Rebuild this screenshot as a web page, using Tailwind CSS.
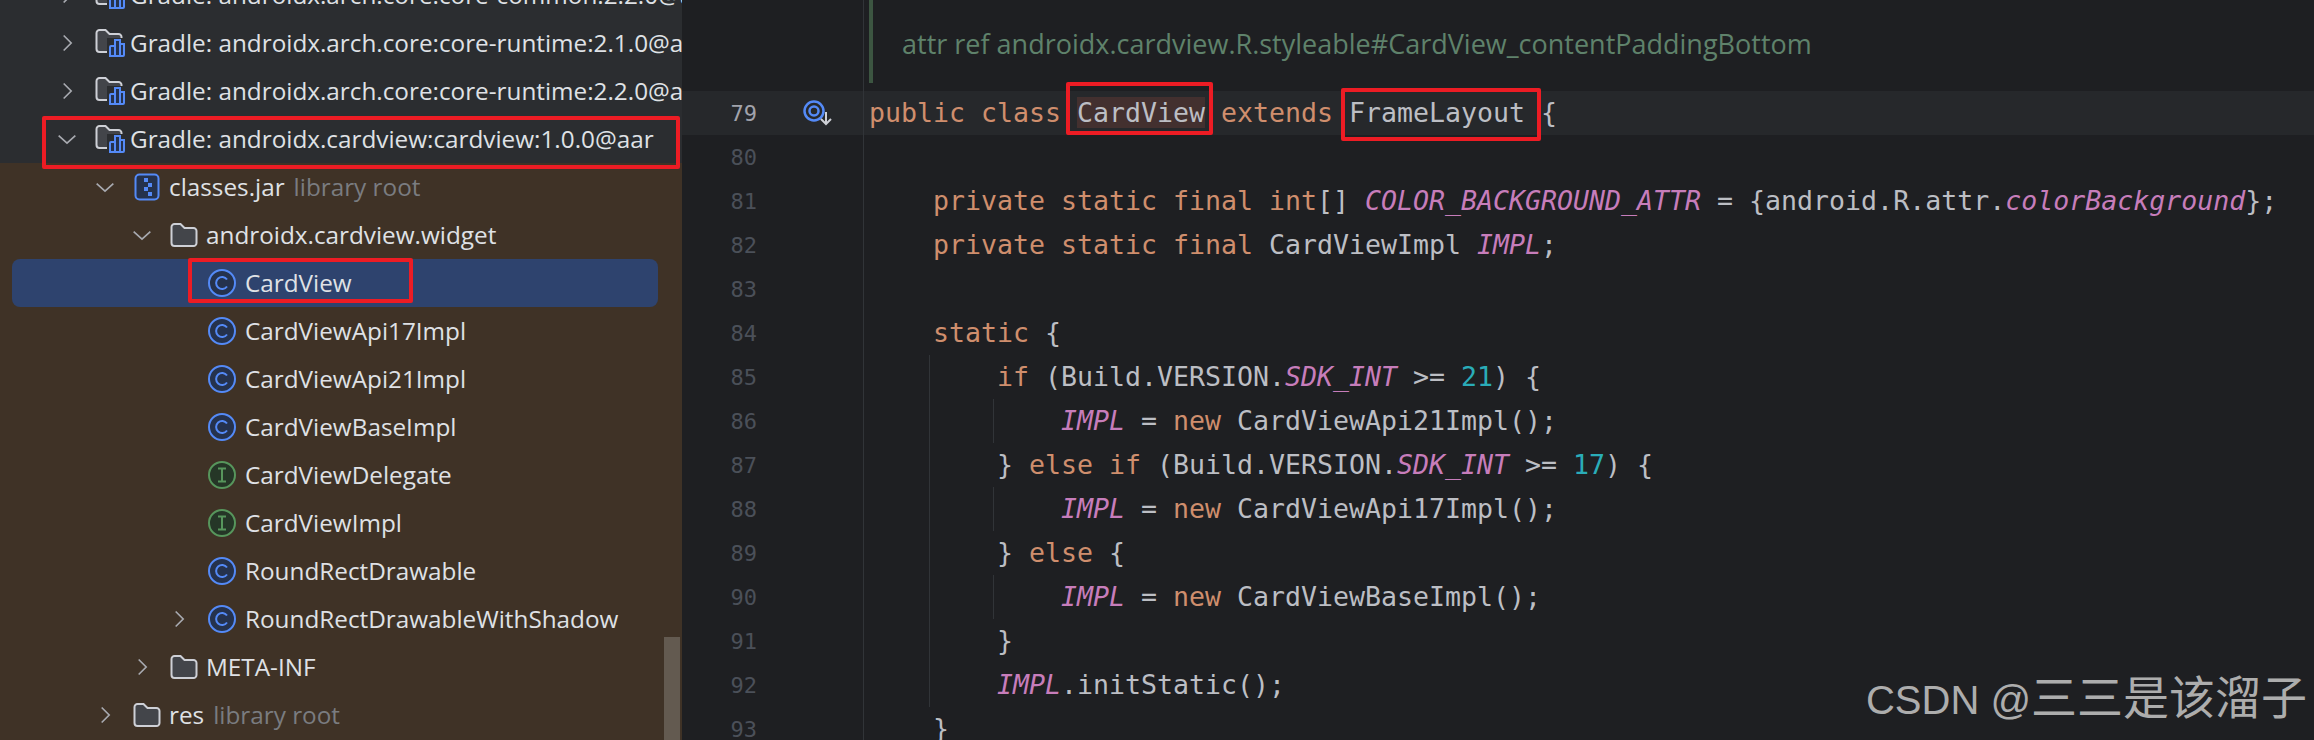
<!DOCTYPE html>
<html lang="en">
<head>
    <meta charset="UTF-8">
    <title>CardView.java</title>
    <script src="https://cdn.jsdelivr.net/npm/@tailwindcss/browser@4"></script>
</head>
<body class="bg-[#1e1f22]">
    <!-- shared icons -->
    <svg class="hidden">
        <symbol id="chevron-right" viewBox="0 0 24 24"><path d="M8 3l9 9-9 9" fill="none" stroke="#a8aab0" stroke-width="2"/></symbol>
        <symbol id="chevron-down" viewBox="0 0 24 24"><path d="M2 8l10 9 10-9" fill="none" stroke="#a8aab0" stroke-width="2"/></symbol>
        <symbol id="folder" viewBox="0 0 28 26"><path d="M1.5 5a3 3 0 0 1 3-3h6l4 4h9a3 3 0 0 1 3 3v12a3 3 0 0 1-3 3h-19a3 3 0 0 1-3-3z" fill="#43454a" stroke="#ced0d6" stroke-width="2"/></symbol>
        <symbol id="folder-lib" viewBox="0 0 30 28">
            <path d="M1.5 4a3 3 0 0 1 3-3h6l4 4h9a3 3 0 0 1 3 3v12a3 3 0 0 1-3 3h-19a3 3 0 0 1-3-3z" fill="#43454a" stroke="#ced0d6" stroke-width="2"/>
            <rect x="12" y="9" width="18" height="19" fill="#2b2d30"/>
            <path d="M15 27h13a1 1 0 0 0 1-1v-11h-4v-4h-5v6h-4a1 1 0 0 0-1 1z" fill="#25324d" stroke="#548af7" stroke-width="2"/>
            <path d="M20 18v8M25 15v11" stroke="#548af7" stroke-width="2"/>
        </symbol>
        <symbol id="jar" viewBox="0 0 26 28">
            <rect x="1.5" y="1.5" width="23" height="25" rx="4" fill="#25324d" stroke="#548af7" stroke-width="2"/>
            <path d="M10 5h4v4h-4zM14 10h4v4h-4zM10 14h4v4h-4zM14 19h4v4h-4z" fill="#548af7"/>
        </symbol>
        <symbol id="class" viewBox="0 0 28 28">
            <circle cx="14" cy="14" r="13" fill="#25324d" stroke="#548af7" stroke-width="2"/>
            <path d="M19 10.500a6 6 0 1 0 0 7" fill="none" stroke="#548af7" stroke-width="2"/>
        </symbol>
        <symbol id="interface" viewBox="0 0 28 28">
            <circle cx="14" cy="14" r="13" fill="#253627" stroke="#57965c" stroke-width="2"/>
            <path d="M10 7.500h8M10 20.500h8M14 7.500v13" fill="none" stroke="#57965c" stroke-width="2"/>
        </symbol>
    </svg>

    <div class="relative flex h-[740px] w-[2314px] overflow-hidden">
        <!-- project tree -->
        <aside class="relative w-[682px] shrink-0 overflow-hidden bg-[#3f3226] font-['Open_Sans'] text-[24.3px] text-[#dfe1e5] whitespace-nowrap">
            <div class="mt-[-29px] bg-[#2b2d30]">
                <div class="flex h-12 items-center pl-[57px]"><svg class="h-[20px] w-[20px] shrink-0 mr-[18px]"><use href="#chevron-right"/></svg><svg class="h-[28px] w-[30px] shrink-0 mr-[5px]"><use href="#folder-lib"/></svg><span>Gradle: androidx.arch.core:core-common:2.2.0@aar</span></div>
                <div class="flex h-12 items-center pl-[57px]"><svg class="h-[20px] w-[20px] shrink-0 mr-[18px]"><use href="#chevron-right"/></svg><svg class="h-[28px] w-[30px] shrink-0 mr-[5px]"><use href="#folder-lib"/></svg><span>Gradle: androidx.arch.core:core-runtime:2.1.0@aar</span></div>
                <div class="flex h-12 items-center pl-[57px]"><svg class="h-[20px] w-[20px] shrink-0 mr-[18px]"><use href="#chevron-right"/></svg><svg class="h-[28px] w-[30px] shrink-0 mr-[5px]"><use href="#folder-lib"/></svg><span>Gradle: androidx.arch.core:core-runtime:2.2.0@aar</span></div>
                <div class="flex h-12 items-center pl-[57px]"><svg class="h-[20px] w-[20px] shrink-0 mr-[18px]"><use href="#chevron-down"/></svg><svg class="h-[28px] w-[30px] shrink-0 mr-[5px]"><use href="#folder-lib"/></svg><span>Gradle: androidx.cardview:cardview:1.0.0@aar</span></div>
            </div>
            <div class="flex h-12 items-center pl-[95px]"><svg class="h-[20px] w-[20px] mr-[19px]"><use href="#chevron-down"/></svg><svg class="h-[28px] w-[26px] mr-[9px]"><use href="#jar"/></svg><span>classes.jar</span><span class="ml-[9px] text-[#7a7c80]">library root</span></div>
            <div class="flex h-12 items-center pl-[132px]"><svg class="h-[20px] w-[20px] mr-[18px]"><use href="#chevron-down"/></svg><svg class="h-[26px] w-[28px] mr-[8px]"><use href="#folder"/></svg><span>androidx.cardview.widget</span></div>
            <div class="ml-[12px] flex h-12 w-[646px] items-center rounded-lg bg-[#2e436e] pl-[196px]"><svg class="h-[28px] w-[28px] mr-[9px]"><use href="#class"/></svg><span>CardView</span></div>
            <div class="flex h-12 items-center pl-[208px]"><svg class="h-[28px] w-[28px] mr-[9px]"><use href="#class"/></svg><span>CardViewApi17Impl</span></div>
            <div class="flex h-12 items-center pl-[208px]"><svg class="h-[28px] w-[28px] mr-[9px]"><use href="#class"/></svg><span>CardViewApi21Impl</span></div>
            <div class="flex h-12 items-center pl-[208px]"><svg class="h-[28px] w-[28px] mr-[9px]"><use href="#class"/></svg><span>CardViewBaseImpl</span></div>
            <div class="flex h-12 items-center pl-[208px]"><svg class="h-[28px] w-[28px] mr-[9px]"><use href="#interface"/></svg><span>CardViewDelegate</span></div>
            <div class="flex h-12 items-center pl-[208px]"><svg class="h-[28px] w-[28px] mr-[9px]"><use href="#interface"/></svg><span>CardViewImpl</span></div>
            <div class="flex h-12 items-center pl-[208px]"><svg class="h-[28px] w-[28px] mr-[9px]"><use href="#class"/></svg><span>RoundRectDrawable</span></div>
            <div class="flex h-12 items-center pl-[169px]"><svg class="h-[20px] w-[20px] mr-[19px]"><use href="#chevron-right"/></svg><svg class="h-[28px] w-[28px] mr-[9px]"><use href="#class"/></svg><span>RoundRectDrawableWithShadow</span></div>
            <div class="flex h-12 items-center pl-[132px]"><svg class="h-[20px] w-[20px] mr-[18px]"><use href="#chevron-right"/></svg><svg class="h-[26px] w-[28px] mr-[8px]"><use href="#folder"/></svg><span>META-INF</span></div>
            <div class="flex h-12 items-center pl-[95px]"><svg class="h-[20px] w-[20px] mr-[18px]"><use href="#chevron-right"/></svg><svg class="h-[26px] w-[28px] mr-[8px]"><use href="#folder"/></svg><span>res</span><span class="ml-[9px] text-[#7a7c80]">library root</span></div>
            <!-- scrollbar -->
            <div class="absolute bottom-0 right-[2px] h-[103px] w-[16px] bg-[#635a50]"></div>
        </aside>

        <!-- editor -->
        <main class="relative min-w-0 flex-1 font-['DejaVu_Sans_Mono'] text-[26.58px] text-[#bcbec4]">
            <div class="flex h-[91px]">
                <div class="w-[182px] shrink-0 border-r border-[#313438]"></div>
                <div class="ml-[5px] mb-[8px] flex w-full items-center border-l-[4px] border-[#3c5541] pl-[29px] pt-[6px] font-['Open_Sans'] text-[27px] text-[#5f826b]">attr ref androidx.cardview.R.styleable#CardView_contentPaddingBottom</div>
            </div>

            <div class="flex h-11 items-center bg-[#26282b]">
                <div class="flex h-full w-[182px] shrink-0 items-center border-r border-[#313438]">
                    <span class="w-[75px] text-right text-[22px] text-[#a1a3ab]">79</span>
                    <svg class="ml-[46px] h-[26px] w-[30px]" viewBox="0 0 30 26"><circle cx="11" cy="11" r="9.500" fill="none" stroke="#548af7" stroke-width="2.500"/><circle cx="11" cy="11" r="4.500" fill="none" stroke="#548af7" stroke-width="2.500"/><path d="M23 12v12M18 19l5 5 5-5" fill="none" stroke="#ced0d6" stroke-width="2"/></svg>
                </div>
                <div class="pl-[5px] whitespace-pre"><span class="text-[#cf8e6d]">public class </span><span class="bg-[#43302f]">CardView</span><span class="text-[#cf8e6d]"> extends </span>FrameLayout {</div>
            </div>
            <div class="flex h-11 items-center"><div class="flex h-full w-[182px] shrink-0 items-center border-r border-[#313438]"><span class="w-[75px] text-right text-[22px] text-[#4b5059]">80</span></div></div>
            <div class="flex h-11 items-center"><div class="flex h-full w-[182px] shrink-0 items-center border-r border-[#313438]"><span class="w-[75px] text-right text-[22px] text-[#4b5059]">81</span></div><div class="pl-[5px] whitespace-pre">    <span class="text-[#cf8e6d]">private static final int</span>[] <span class="text-[#c77dbb] italic">COLOR_BACKGROUND_ATTR</span> = {android.R.attr.<span class="text-[#c77dbb] italic">colorBackground</span>};</div></div>
            <div class="flex h-11 items-center"><div class="flex h-full w-[182px] shrink-0 items-center border-r border-[#313438]"><span class="w-[75px] text-right text-[22px] text-[#4b5059]">82</span></div><div class="pl-[5px] whitespace-pre">    <span class="text-[#cf8e6d]">private static final</span> CardViewImpl <span class="text-[#c77dbb] italic">IMPL</span>;</div></div>
            <div class="flex h-11 items-center"><div class="flex h-full w-[182px] shrink-0 items-center border-r border-[#313438]"><span class="w-[75px] text-right text-[22px] text-[#4b5059]">83</span></div></div>
            <div class="flex h-11 items-center"><div class="flex h-full w-[182px] shrink-0 items-center border-r border-[#313438]"><span class="w-[75px] text-right text-[22px] text-[#4b5059]">84</span></div><div class="pl-[5px] whitespace-pre">    <span class="text-[#cf8e6d]">static</span> {</div></div>
            <div class="flex h-11 items-center"><div class="flex h-full w-[182px] shrink-0 items-center border-r border-[#313438]"><span class="w-[75px] text-right text-[22px] text-[#4b5059]">85</span></div><div class="pl-[5px] whitespace-pre">        <span class="text-[#cf8e6d]">if</span> (Build.VERSION.<span class="text-[#c77dbb] italic">SDK_INT</span> &gt;= <span class="text-[#2aacb8]">21</span>) {</div></div>
            <div class="flex h-11 items-center"><div class="flex h-full w-[182px] shrink-0 items-center border-r border-[#313438]"><span class="w-[75px] text-right text-[22px] text-[#4b5059]">86</span></div><div class="pl-[5px] whitespace-pre">            <span class="text-[#c77dbb] italic">IMPL</span> = <span class="text-[#cf8e6d]">new</span> CardViewApi21Impl();</div></div>
            <div class="flex h-11 items-center"><div class="flex h-full w-[182px] shrink-0 items-center border-r border-[#313438]"><span class="w-[75px] text-right text-[22px] text-[#4b5059]">87</span></div><div class="pl-[5px] whitespace-pre">        } <span class="text-[#cf8e6d]">else if</span> (Build.VERSION.<span class="text-[#c77dbb] italic">SDK_INT</span> &gt;= <span class="text-[#2aacb8]">17</span>) {</div></div>
            <div class="flex h-11 items-center"><div class="flex h-full w-[182px] shrink-0 items-center border-r border-[#313438]"><span class="w-[75px] text-right text-[22px] text-[#4b5059]">88</span></div><div class="pl-[5px] whitespace-pre">            <span class="text-[#c77dbb] italic">IMPL</span> = <span class="text-[#cf8e6d]">new</span> CardViewApi17Impl();</div></div>
            <div class="flex h-11 items-center"><div class="flex h-full w-[182px] shrink-0 items-center border-r border-[#313438]"><span class="w-[75px] text-right text-[22px] text-[#4b5059]">89</span></div><div class="pl-[5px] whitespace-pre">        } <span class="text-[#cf8e6d]">else</span> {</div></div>
            <div class="flex h-11 items-center"><div class="flex h-full w-[182px] shrink-0 items-center border-r border-[#313438]"><span class="w-[75px] text-right text-[22px] text-[#4b5059]">90</span></div><div class="pl-[5px] whitespace-pre">            <span class="text-[#c77dbb] italic">IMPL</span> = <span class="text-[#cf8e6d]">new</span> CardViewBaseImpl();</div></div>
            <div class="flex h-11 items-center"><div class="flex h-full w-[182px] shrink-0 items-center border-r border-[#313438]"><span class="w-[75px] text-right text-[22px] text-[#4b5059]">91</span></div><div class="pl-[5px] whitespace-pre">        }</div></div>
            <div class="flex h-11 items-center"><div class="flex h-full w-[182px] shrink-0 items-center border-r border-[#313438]"><span class="w-[75px] text-right text-[22px] text-[#4b5059]">92</span></div><div class="pl-[5px] whitespace-pre">        <span class="text-[#c77dbb] italic">IMPL</span>.initStatic();</div></div>
            <div class="flex h-11 items-center"><div class="flex h-full w-[182px] shrink-0 items-center border-r border-[#313438]"><span class="w-[75px] text-right text-[22px] text-[#4b5059]">93</span></div><div class="pl-[5px] whitespace-pre">    }</div></div>

            <!-- indent guides -->
            <div class="absolute left-[247px] top-[355px] h-[352px] w-px bg-[#313438]"></div>
            <div class="absolute left-[311px] top-[399px] h-[44px] w-px bg-[#313438]"></div>
            <div class="absolute left-[311px] top-[487px] h-[44px] w-px bg-[#313438]"></div>
            <div class="absolute left-[311px] top-[575px] h-[44px] w-px bg-[#313438]"></div>
        </main>

        <!-- red annotation boxes drawn over the screenshot -->
        <div class="absolute left-[42px] top-[116px] h-[53px] w-[638px] rounded-[2px] border-4 border-[#ed1c24]"></div>
        <div class="absolute left-[188px] top-[258px] h-[45px] w-[225px] rounded-[2px] border-4 border-[#ed1c24]"></div>
        <div class="absolute left-[1066px] top-[82px] h-[53px] w-[147px] rounded-[2px] border-4 border-[#ed1c24]"></div>
        <div class="absolute left-[1341px] top-[88px] h-[53px] w-[200px] rounded-[2px] border-4 border-[#ed1c24]"></div>

        <!-- watermark -->
        <div class="absolute right-[7px] top-[664px] flex items-baseline font-['Liberation_Sans','Noto_Sans_CJK_SC',sans-serif] text-[#adadad] whitespace-pre"><span class="text-[40px]">CSDN @</span><span class="text-[46px]">三三是该溜子</span></div>
    </div>
</body>
</html>
